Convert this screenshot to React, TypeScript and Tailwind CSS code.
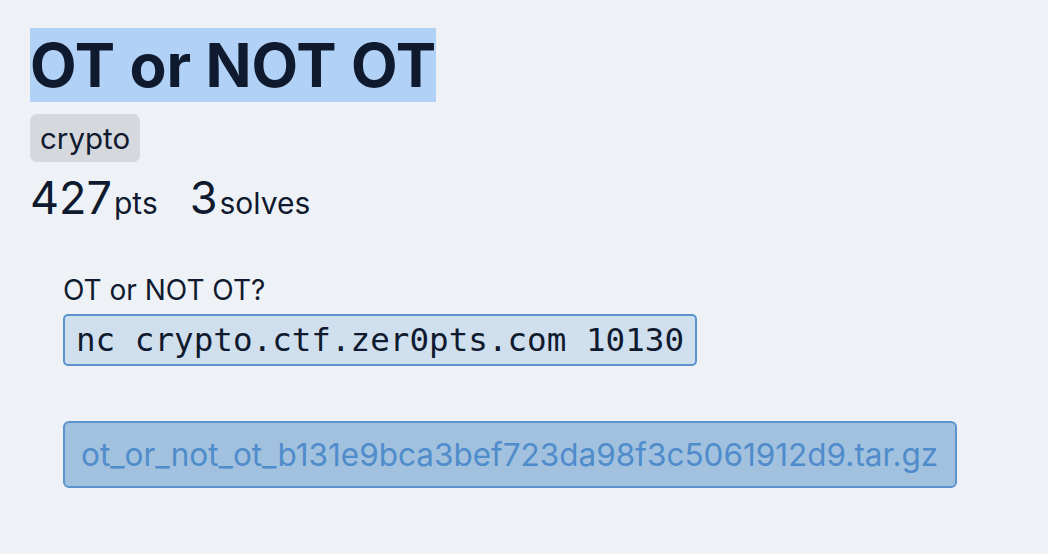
import React from "react";

export default function App() {
  return (
    <div className="min-h-[554px] w-full bg-[#eef2f7] px-[30px] pt-[28px] font-['Inter',sans-serif] text-[#0f1a2f]">
      {/* header */}
      <h1 className="text-[60.5px] font-bold leading-[75px]">
        <span className="bg-[#b1d2f6]">OT or NOT OT</span>
      </h1>
      <div className="mt-[11px] flex">
        <span className="rounded-[7px] bg-[#d5d8dc] px-[10px] text-[29.5px] leading-[48px]">crypto</span>
      </div>
      <div className="mt-[8px] flex items-baseline text-[45px] leading-[56px]">
        <span>427</span>
        <span className="ml-[2px] text-[30px]">pts</span>
        <span className="ml-[32px]">3</span>
        <span className="ml-[2px] text-[30px]">solves</span>
      </div>

      {/* description */}
      <div className="mt-[42px] pl-[33px]">
        <p className="text-[28px] leading-[34px]">OT or NOT OT?</p>
        <div className="mt-[7px] flex">
          <code className="rounded-[5px] border-2 border-[#5b93cc] bg-[#d0dfee] px-[11px] font-['DejaVu_Sans_Mono',monospace] text-[32.6px] leading-[48px]">
            nc crypto.ctf.zer0pts.com 10130
          </code>
        </div>
        <div className="mt-[55px] flex">
          <a className="flex h-[67px] w-[894px] items-center rounded-[6px] border-2 border-[#5b93cc] bg-[#a2c1df] px-[16px] text-[31.5px] text-[#4f8ccb]">
            ot_or_not_ot_b131e9bca3bef723da98f3c5061912d9.tar.gz
          </a>
        </div>
      </div>
    </div>
  );
}
